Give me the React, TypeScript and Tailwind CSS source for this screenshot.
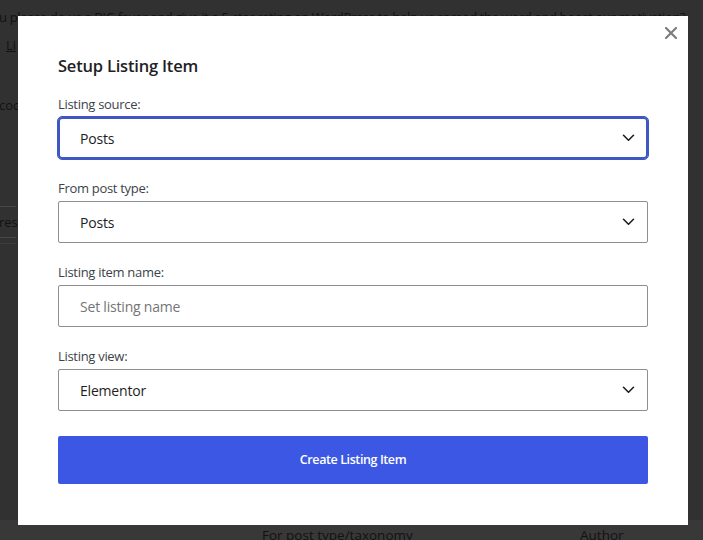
import React from "react";

function Chevron() {
  return (
    <svg width="13" height="8" viewBox="0 0 13 8" fill="none" className="shrink-0">
      <path d="M1.5 1.3 L6.5 6.2 L11.5 1.3" stroke="#1e1e1e" strokeWidth="1.6" strokeLinecap="round" strokeLinejoin="round" />
    </svg>
  );
}

function Label({ children }: { children: React.ReactNode }) {
  return <div className="mb-1 text-[13px] leading-[18px] tracking-[-0.3px] text-[#3c434a]">{children}</div>;
}

function SelectBox({ value, focused }: { value: string; focused?: boolean }) {
  return (
    <div
      className={
        focused
          ? "flex h-[42px] items-center justify-between rounded-[4px] border-2 border-[#3f57c2] pl-[20px] pr-[11px] outline outline-1 outline-[#3f57c2] text-[14px] tracking-[-0.2px] text-[#1e1e1e]"
          : "flex h-[42px] items-center justify-between rounded-[2px] border border-[#8c8f94] pl-[21px] pr-[12px] text-[14px] tracking-[-0.2px] text-[#1e1e1e]"
      }
    >
      <span>{value}</span>
      <Chevron />
    </div>
  );
}

export default function App() {
  return (
    <div className="relative h-[540px] w-[703px] overflow-hidden bg-[#313131] font-['Open_Sans',sans-serif] text-[#121212]">
      <div className="flex flex-col">
        <div className="-ml-[1px] h-[36px] overflow-hidden whitespace-nowrap pt-[8px] text-[13px] leading-[18px] tracking-[-0.35px]">
          u please do us a BIG favor and give it a 5-star rating on WordPress to help us spread the word and boost our motivation?
        </div>
        <div className="h-[60px] pl-[6px] text-[13px] leading-[18px]">
          <span className="underline">Li</span>
        </div>
        <div className="h-[110px] text-[13px] leading-[18px] -ml-[1px]">coc</div>
        <div className="w-[16px] border-t border-[#474747]" />
        <div className="h-[30px] pt-[6px] text-[13px] leading-[18px] -ml-[1px]">res</div>
        <div className="w-[16px] border-t border-[#474747]" />
        <div className="mt-[5px] w-[16px] border-t border-[#3d3d3d]" />
        <div className="h-[276px]" />
        <div className="flex h-[20px] items-start bg-[#383838] pt-[6px] text-[13.5px] leading-[18px]">
          <span className="ml-[262px] w-[318px]">For post type/taxonomy</span>
          <span>Author</span>
        </div>
      </div>

      <div className="absolute left-[18px] top-[16px] h-[509px] w-[670px] bg-white px-[40px] pt-[39px]">
        <button className="absolute right-[10px] top-[10px] flex h-[14px] w-[14px] items-center justify-center" aria-label="Close">
          <svg width="12" height="12" viewBox="0 0 12 12" fill="none">
            <path d="M1 1 L11 11 M11 1 L1 11" stroke="#7a7d82" strokeWidth="2.2" strokeLinecap="round" />
          </svg>
        </button>
        <div className="mb-[18px] text-[16.5px] font-semibold leading-[22px] tracking-[-0.2px] text-[#1e2124]">Setup Listing Item</div>

        <div className="flex flex-col gap-[20px]">
          <div>
            <Label>Listing source:</Label>
            <SelectBox value="Posts" focused />
          </div>
          <div>
            <Label>From post type:</Label>
            <SelectBox value="Posts" />
          </div>
          <div>
            <Label>Listing item name:</Label>
            <div className="flex h-[42px] items-center rounded-[2px] border border-[#8c8f94] pl-[21px] text-[14px] tracking-[-0.2px] text-[#757575]">
              Set listing name
            </div>
          </div>
          <div>
            <Label>Listing view:</Label>
            <SelectBox value="Elementor" />
          </div>
        </div>

        <button className="mt-[25px] flex h-[48px] w-full items-center justify-center rounded-[2px] bg-[#3b57e3] text-[12.5px] font-semibold tracking-[-0.4px] text-white">
          Create Listing Item
        </button>
      </div>
    </div>
  );
}
